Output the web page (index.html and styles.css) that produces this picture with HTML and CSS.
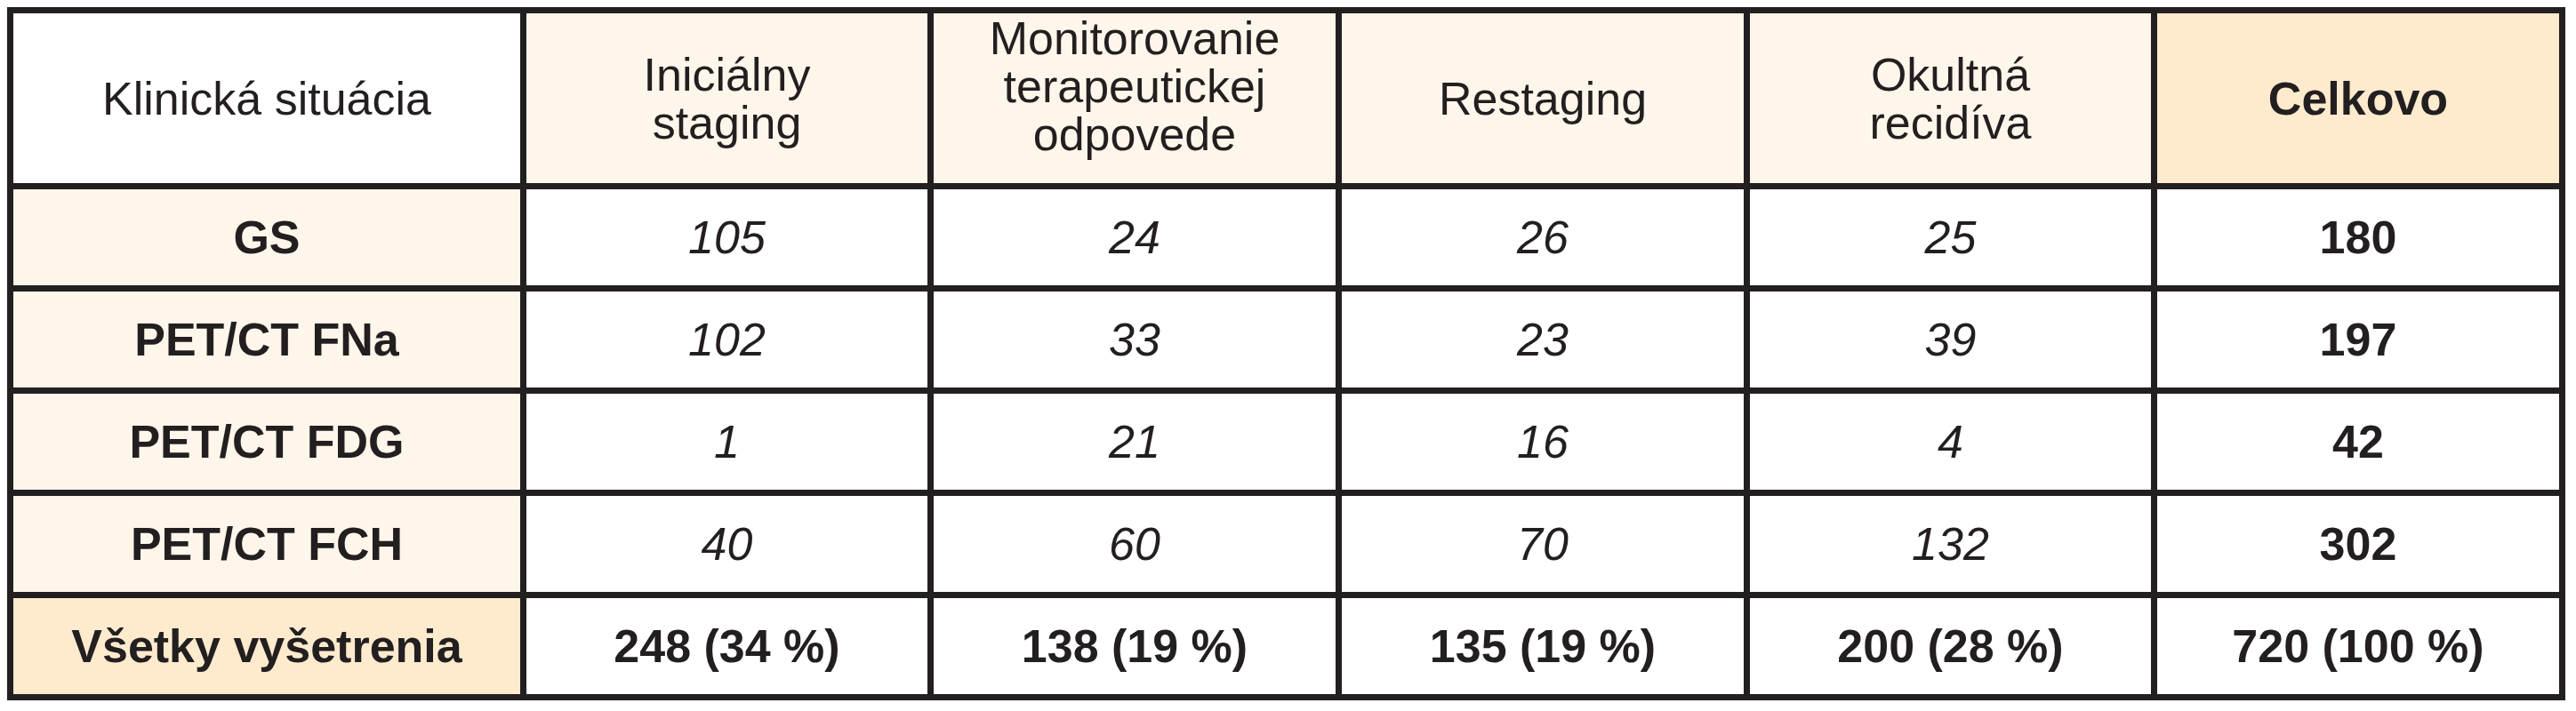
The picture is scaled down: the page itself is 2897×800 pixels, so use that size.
FILE: index.html
```html
<!DOCTYPE html>
<html lang="sk">
<head>
<meta charset="utf-8">
<title>Tabuľka</title>
<link rel="stylesheet" href="styles.css">
</head>
<body>
<table class="grid">
  <thead>
    <tr class="head">
      <th class="c1 plain">Klinická situácia</th>
      <th class="c2 cream">Iniciálny<br>staging</th>
      <th class="c3 cream tall">Monitorovanie<br>terapeutickej<br>odpovede</th>
      <th class="c4 cream">Restaging</th>
      <th class="c5 cream">Okultná<br>recidíva</th>
      <th class="c6 deep strong">Celkovo</th>
    </tr>
  </thead>
  <tbody>
    <tr class="row">
      <th class="cream strong">GS</th>
      <td class="num">105</td><td class="num">24</td><td class="num">26</td><td class="num">25</td>
      <td class="tot">180</td>
    </tr>
    <tr class="row">
      <th class="cream strong">PET/CT FNa</th>
      <td class="num">102</td><td class="num">33</td><td class="num">23</td><td class="num">39</td>
      <td class="tot">197</td>
    </tr>
    <tr class="row">
      <th class="cream strong">PET/CT FDG</th>
      <td class="num">1</td><td class="num">21</td><td class="num">16</td><td class="num">4</td>
      <td class="tot">42</td>
    </tr>
    <tr class="row">
      <th class="cream strong">PET/CT FCH</th>
      <td class="num">40</td><td class="num">60</td><td class="num">70</td><td class="num">132</td>
      <td class="tot">302</td>
    </tr>
    <tr class="row last">
      <th class="deep strong">Všetky vyšetrenia</th>
      <td class="tot">248 (34 %)</td><td class="tot">138 (19 %)</td><td class="tot">135 (19 %)</td><td class="tot">200 (28 %)</td>
      <td class="tot">720 (100 %)</td>
    </tr>
  </tbody>
</table>
</body>
</html>
```
FILE: styles.css
```css
html, body {
  background: #ffffff;
}
body {
  margin: 8px;
  font-family: "Liberation Sans", Arial, sans-serif;
  color: #231f20;
}
.grid {
  border-collapse: separate;
  border-spacing: 0;
  table-layout: fixed;
  width: 2877px;
  border-left: 7px solid #231f20;
  border-top: 7px solid #231f20;
}
.grid th, .grid td {
  box-sizing: border-box;
  border-right: 7px solid #231f20;
  border-bottom: 7px solid #231f20;
  padding: 0;
  text-align: center;
  vertical-align: middle;
  font-size: 52px;
  line-height: 54px;
  font-weight: normal;
}
.grid .c1 { width: 577px; }
.grid .c2 { width: 458px; }
.grid .c3 { width: 459px; }
.grid .c4 { width: 459px; }
.grid .c5 { width: 458px; }
.grid .c6 { width: 459px; }
.grid .head th { height: 198px; }
.grid .head .tall { padding-bottom: 28px; }
.grid .row th, .grid .row td { height: 115px; }
.grid .plain { background: #ffffff; }
.grid .cream { background: #fef6ea; }
.grid .deep { background: #feebcd; }
.grid .strong { font-weight: bold; }
.grid .num { font-style: italic; background: #ffffff; }
.grid .tot { font-weight: bold; background: #ffffff; }
```
